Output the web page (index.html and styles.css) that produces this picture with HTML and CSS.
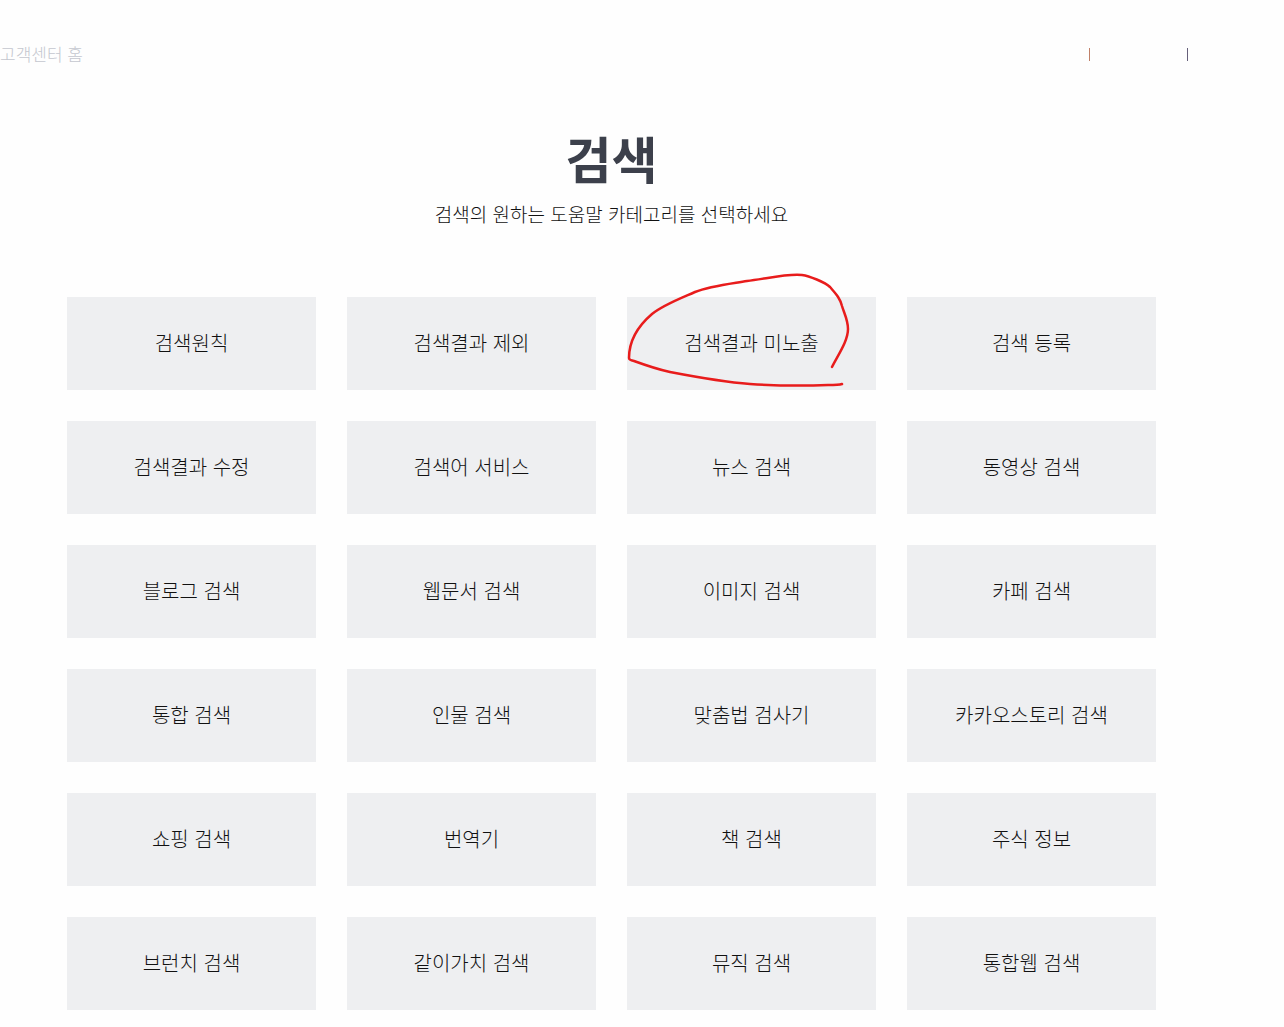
FILE: index.html
```html
<!DOCTYPE html>
<html lang="ko">
<head>
    <meta charset="UTF-8">
    <meta name="viewport" content="width=device-width, initial-scale=1.0">
    <title>검색</title>
    <link rel="stylesheet" href="styles.css">
</head>
<body>

    <header class="header">
        <a class="home-link" href="#">고객센터 홈</a>
        <div class="util-menu">
            <span class="bar bar-warm"></span>
            <span class="bar"></span>
        </div>
    </header>

    <main class="content">
        <h1 class="title">검색</h1>
        <p class="desc">검색의 원하는 도움말 카테고리를 선택하세요</p>

        <!-- Category list -->
        <ul class="category-list">
            <li><a href="#">검색원칙</a></li>
            <li><a href="#">검색결과 제외</a></li>
            <li class="marked">
                <a href="#">검색결과 미노출</a>
                <svg class="mark" width="249" height="124" viewBox="627 266 249 124" aria-hidden="true">
                    <path d="M832 367C838 355 848 341 848 329C848 320 844 313 842 306C840 298 836 294 830 287C825 282 809 276 802 275C789 273 765 279 747 281C729 284 710 286 695 292C679 299 663 305 652 314C638 326 629 340 629 358Q629 360 634 361C645 365 656 369 670 372C696 377 724 382 750 384C780 386 804 386 828 385Q839 385 842 384"/>
                </svg>
            </li>
            <li><a href="#">검색 등록</a></li>
            <li><a href="#">검색결과 수정</a></li>
            <li><a href="#">검색어 서비스</a></li>
            <li><a href="#">뉴스 검색</a></li>
            <li><a href="#">동영상 검색</a></li>
            <li><a href="#">블로그 검색</a></li>
            <li><a href="#">웹문서 검색</a></li>
            <li><a href="#">이미지 검색</a></li>
            <li><a href="#">카페 검색</a></li>
            <li><a href="#">통합 검색</a></li>
            <li><a href="#">인물 검색</a></li>
            <li><a href="#">맞춤법 검사기</a></li>
            <li><a href="#">카카오스토리 검색</a></li>
            <li><a href="#">쇼핑 검색</a></li>
            <li><a href="#">번역기</a></li>
            <li><a href="#">책 검색</a></li>
            <li><a href="#">주식 정보</a></li>
            <li><a href="#">브런치 검색</a></li>
            <li><a href="#">같이가치 검색</a></li>
            <li><a href="#">뮤직 검색</a></li>
            <li><a href="#">통합웹 검색</a></li>
        </ul>
    </main>

</body>
</html>
```

FILE: styles.css
```css
* {
    margin: 0;
    padding: 0;
    box-sizing: border-box;
}
body {
    background: #fefefe;
    color: #111;
    font-family: "Noto Sans CJK KR", sans-serif;
    font-weight: 300;
}
a {
    color: inherit;
    text-decoration: none;
}
.header {
    display: flex;
    justify-content: space-between;
    align-items: center;
    height: 108px;
    padding-right: 96px;
}
.home-link {
    padding-bottom: 2px;
    font-size: 17px;
    color: #c4c7cf;
}
.util-menu {
    display: flex;
    gap: 97px;
}
.bar {
    width: 1px;
    height: 13px;
    background: #66607a;
}
.bar-warm {
    background: #c08068;
}
.content {
    padding: 13px 128px 16px 67px;
}
.title {
    font-size: 50px;
    line-height: 72px;
    font-weight: 700;
    text-align: center;
    color: #3c404b;
}
.desc {
    margin-top: 3px;
    font-size: 19px;
    line-height: 36px;
    text-align: center;
}
.category-list {
    display: grid;
    grid-template-columns: repeat(4, 1fr);
    gap: 31px;
    margin-top: 65px;
    list-style: none;
}
.category-list a {
    display: flex;
    justify-content: center;
    align-items: center;
    height: 93px;
    padding-bottom: 2px;
    background: #eeeff1;
    font-size: 20px;
}
.marked {
    position: relative;
}
/* hand-drawn circle over the card */
.mark {
    position: absolute;
    left: 0;
    bottom: 0;
    overflow: visible;
    pointer-events: none;
}
.mark path {
    fill: none;
    stroke: #e81c1c;
    stroke-width: 2.5;
    stroke-linecap: round;
    stroke-linejoin: round;
}
```
